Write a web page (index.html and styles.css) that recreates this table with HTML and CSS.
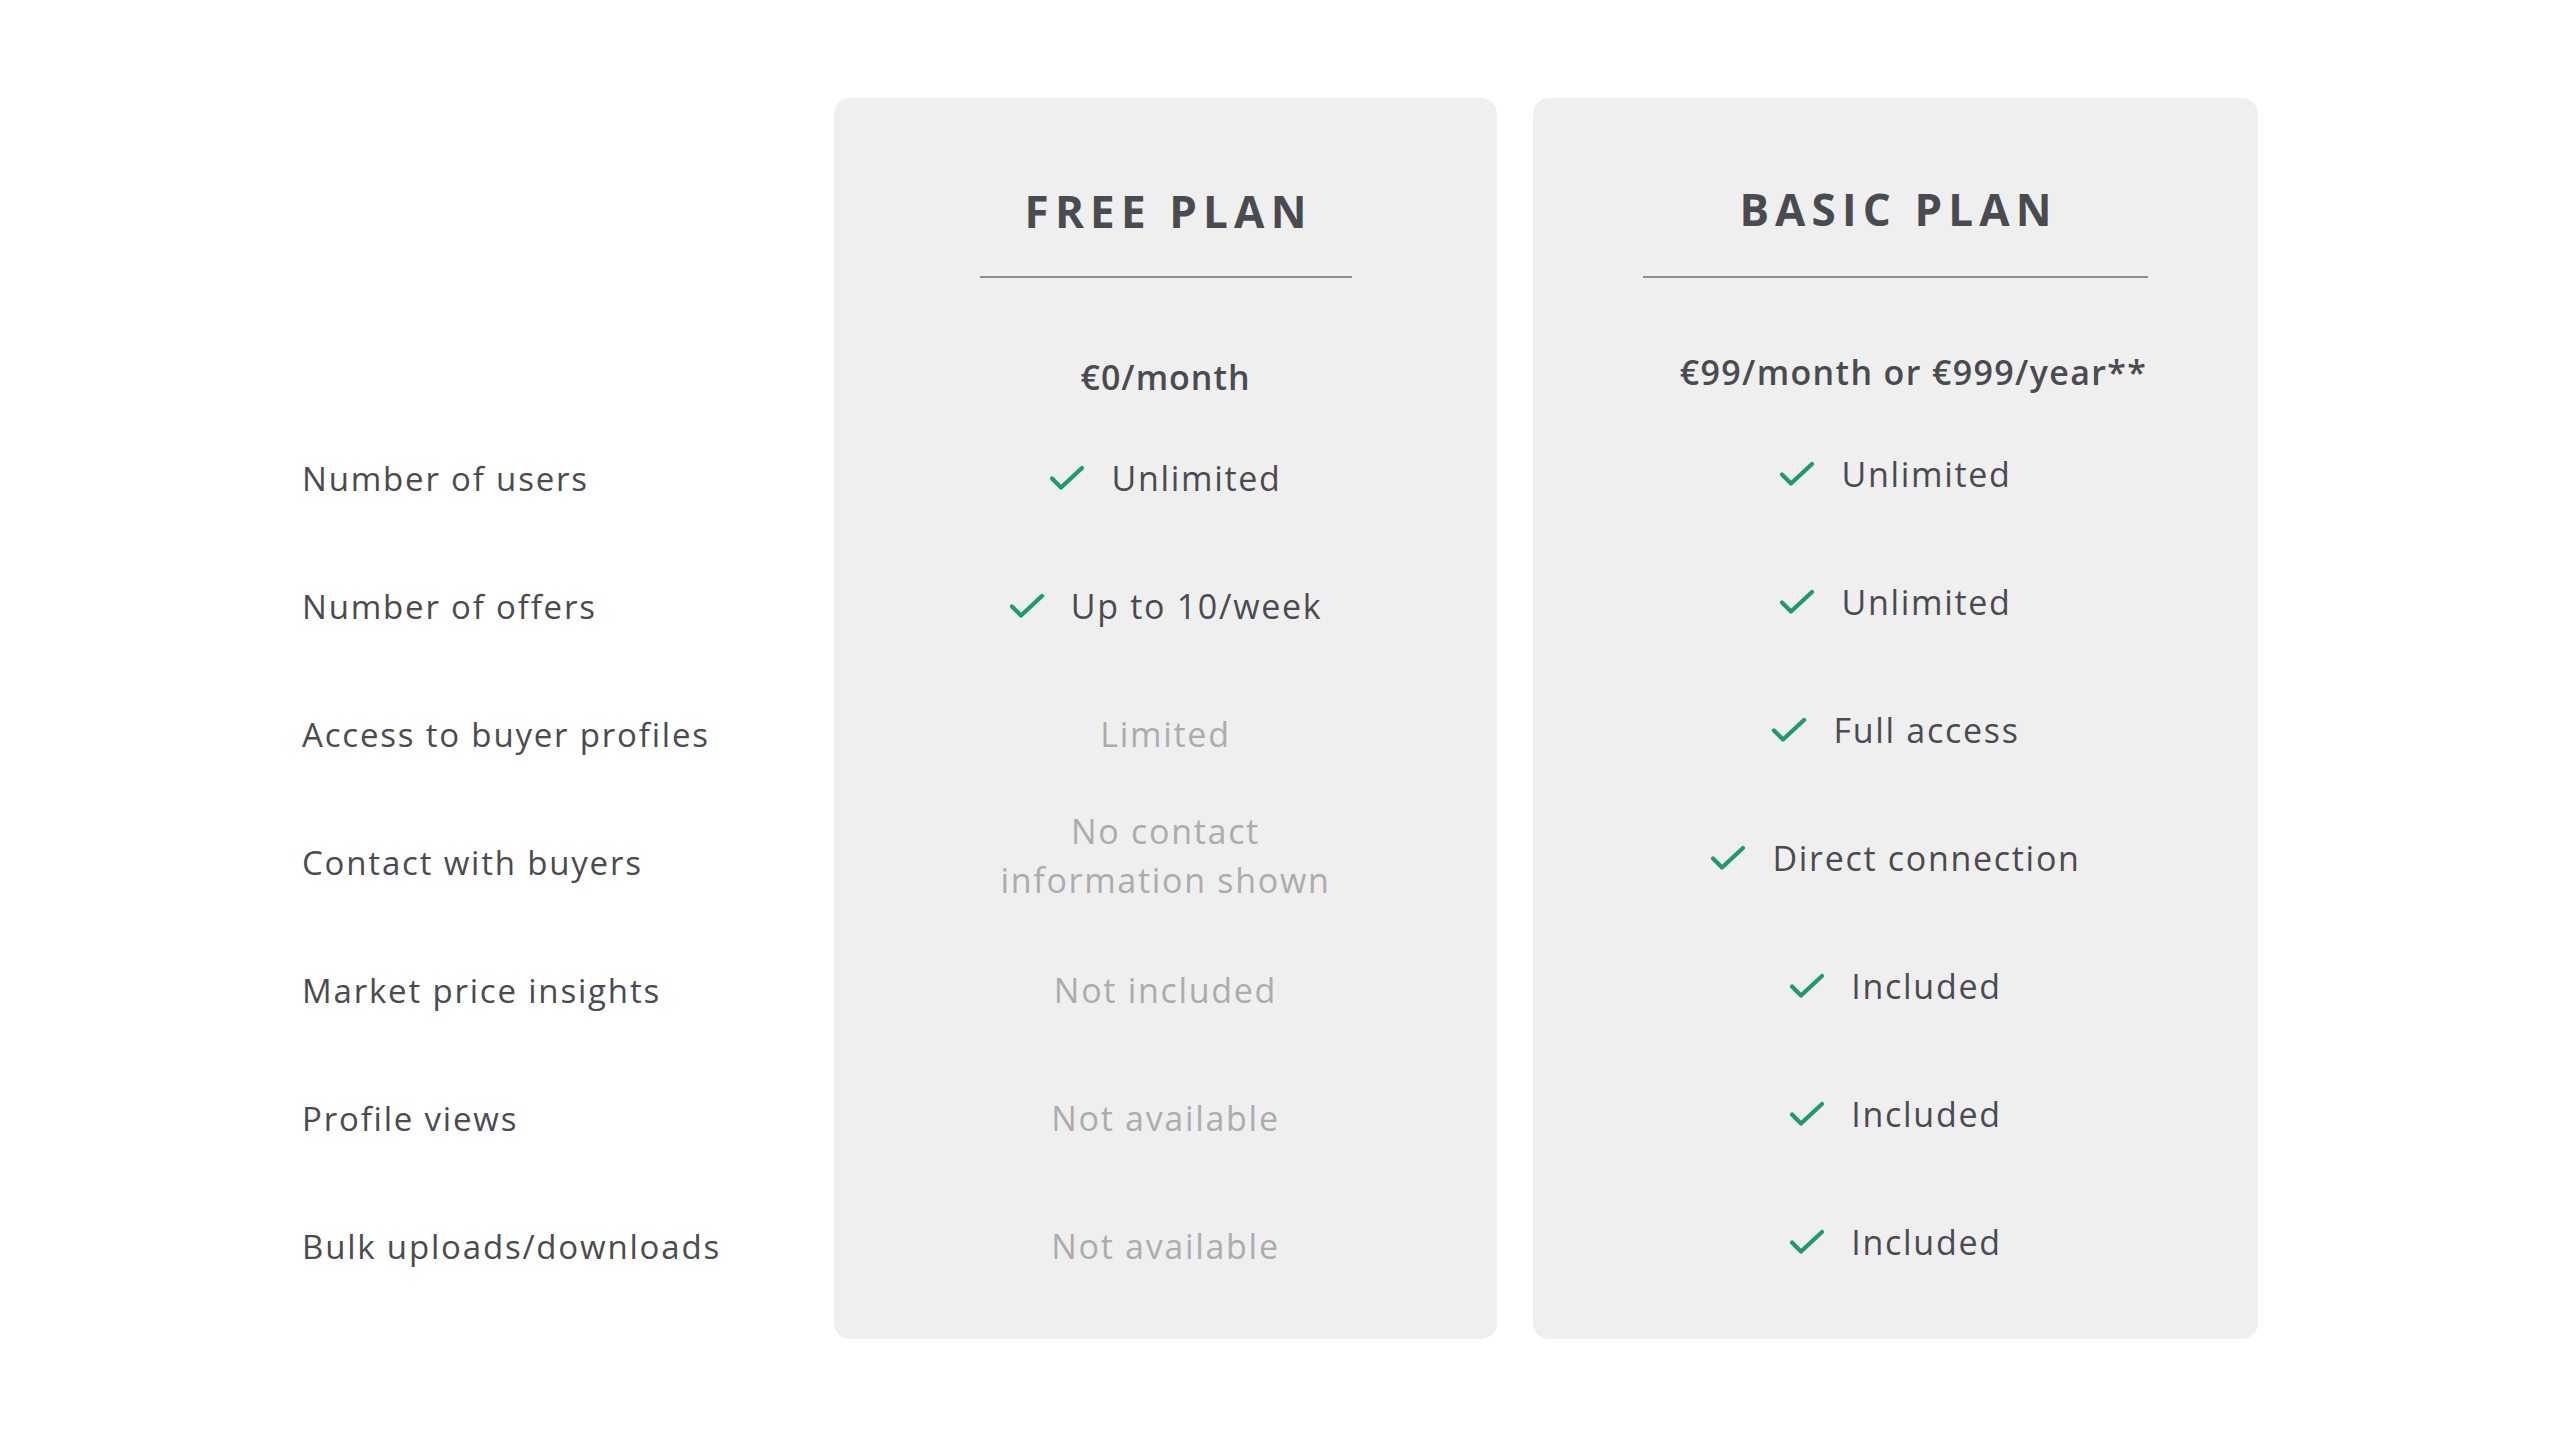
FILE: index.html
```html
<!DOCTYPE html>
<html lang="en">
<head>
    <meta charset="UTF-8">
    <meta name="viewport" content="width=device-width, initial-scale=1.0">
    <title>Plans</title>
    <link rel="stylesheet" href="styles.css">
</head>
<body>
    <div class="compare">
        <div class="labels">
            <div class="labels-head"></div>
            <div class="row">Number of users</div>
            <div class="row">Number of offers</div>
            <div class="row">Access to buyer profiles</div>
            <div class="row">Contact with buyers</div>
            <div class="row">Market price insights</div>
            <div class="row">Profile views</div>
            <div class="row">Bulk uploads/downloads</div>
        </div>

        <div class="card card-free">
            <div class="card-head">
                <h2 class="plan-name">FREE PLAN</h2>
                <div class="rule"></div>
                <div class="price">€0/month</div>
            </div>
            <div class="row"><span class="check"></span>Unlimited</div>
            <div class="row"><span class="check"></span>Up to 10/week</div>
            <div class="row muted">Limited</div>
            <div class="row muted"><span class="wrap">No contact information shown</span></div>
            <div class="row muted">Not included</div>
            <div class="row muted">Not available</div>
            <div class="row muted">Not available</div>
        </div>

        <div class="card card-basic">
            <div class="card-head">
                <h2 class="plan-name">BASIC PLAN</h2>
                <div class="rule"></div>
                <div class="price">€99/month or €999/year**</div>
            </div>
            <div class="row"><span class="check"></span>Unlimited</div>
            <div class="row"><span class="check"></span>Unlimited</div>
            <div class="row"><span class="check"></span>Full access</div>
            <div class="row"><span class="check"></span>Direct connection</div>
            <div class="row"><span class="check"></span>Included</div>
            <div class="row"><span class="check"></span>Included</div>
            <div class="row"><span class="check"></span>Included</div>
        </div>
    </div>

    <script>
        // same tick in every ticked cell
        const tick = '<svg width="36" height="26" viewBox="0 0 36 26"><path d="M3 13.5 L12 22.5 L33 3" fill="none" stroke="#1b9a73" stroke-width="4.2" stroke-linecap="round" stroke-linejoin="round"/></svg>';
        document.querySelectorAll('.check').forEach(el => el.innerHTML = tick);
    </script>
</body>
</html>
```

FILE: styles.css
```css
body {
    margin: 0;
    background-color: #fff;
    font-family: 'Open Sans', 'Noto Sans', sans-serif;
    color: #4a4b51;
}

.compare {
    display: grid;
    grid-template-columns: 496px 663px 725px;
    column-gap: 36px;
    align-items: start;
    padding: 98px 0 0 302px;
}

.labels-head {
    height: 316px;
}

.labels .row {
    justify-content: flex-start;
    font-size: 33px;
    font-weight: 500;
    letter-spacing: 0.055em;
    white-space: nowrap;
}

.row {
    height: 128px;
    display: flex;
    align-items: center;
    justify-content: center;
    font-size: 34px;
    letter-spacing: 0.05em;
    text-align: center;
}

.row.muted {
    color: #acacae;
}

.wrap {
    max-width: 370px;
    line-height: 49px;
    margin-top: -12px;
}

.check {
    display: flex;
    margin-right: 26px;
}

.card {
    background-color: #efefef;
    border-radius: 16px;
    padding-bottom: 29px;
}

.card-head {
    height: 316px;
    box-sizing: border-box;
    padding-top: 85px;
    display: flex;
    flex-direction: column;
    align-items: center;
}

.plan-name {
    margin: 0;
    font-size: 44px;
    line-height: 56px;
    font-weight: 700;
    letter-spacing: 0.14em;
    padding-left: 0.14em;
}

.rule {
    height: 2px;
    background-color: #8d8d92;
    margin-top: 37px;
}

.card-free .rule {
    width: 372px;
}

.card-basic .rule {
    width: 505px;
}

.price {
    margin-top: 77px;
    font-size: 34px;
    line-height: 44px;
    font-weight: 600;
    letter-spacing: 0.03em;
}

/* basic column sits a few px higher in the mock */
.card-basic {
    padding-bottom: 33px;
}

.card-basic .card-head {
    height: 312px;
    padding-top: 83px;
}

.card-basic .rule {
    margin-top: 39px;
}

.card-basic .price {
    margin-top: 72px;
    padding-left: 36px;
    letter-spacing: 0.04em;
}
```
